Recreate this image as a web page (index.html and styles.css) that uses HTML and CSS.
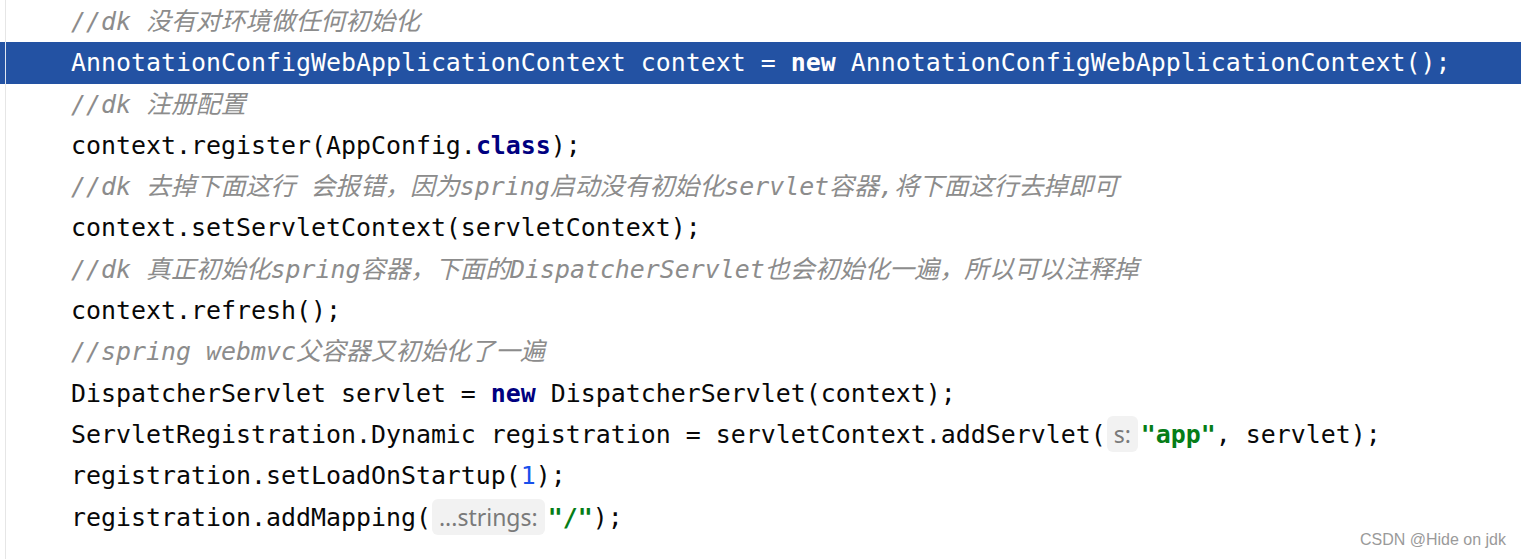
FILE: index.html
```html
<!DOCTYPE html>
<html>
<head>
<meta charset="utf-8">
<link rel="stylesheet" href="styles.css">
</head>
<body>
<div class="editor">
  <div class="line"><span class="cm">//dk 没有对环境做任何初始化</span></div>
  <div class="line selected">AnnotationConfigWebApplicationContext context = <span class="kw">new</span> AnnotationConfigWebApplicationContext();</div>
  <div class="line"><span class="cm">//dk 注册配置</span></div>
  <div class="line">context.register(AppConfig.<span class="kw">class</span>);</div>
  <div class="line"><span class="cm">//dk 去掉下面这行 会报错，因为spring启动没有初始化servlet容器,将下面这行去掉即可</span></div>
  <div class="line">context.setServletContext(servletContext);</div>
  <div class="line"><span class="cm">//dk 真正初始化spring容器，下面的DispatcherServlet也会初始化一遍，所以可以注释掉</span></div>
  <div class="line">context.refresh();</div>
  <div class="line"><span class="cm">//spring webmvc父容器又初始化了一遍</span></div>
  <div class="line">DispatcherServlet servlet = <span class="kw">new</span> DispatcherServlet(context);</div>
  <div class="line">ServletRegistration.Dynamic registration = servletContext.addServlet(<span class="hint">s:</span><span class="str">"app"</span>, servlet);</div>
  <div class="line">registration.setLoadOnStartup(<span class="num">1</span>);</div>
  <div class="line">registration.addMapping(<span class="hint">...strings:</span><span class="str">"/"</span>);</div>
  <div class="watermark">CSDN @Hide on jdk</div>
</div>
</body>
</html>
```

FILE: styles.css
```css
html, body {
  margin: 0;
  padding: 0;
  background: #ffffff;
}

.editor {
  position: relative;
  width: 1521px;
  height: 559px;
  overflow: hidden;
  padding-top: 1px;
  box-sizing: border-box;
  background: linear-gradient(to right, #ffffff 5px, #e6e6e6 5px, #e6e6e6 6px, #ffffff 6px);
}

.line {
  height: 41.3px;
  line-height: 41.3px;
  padding-left: 71px;
  white-space: pre;
  font-family: "DejaVu Sans Mono", "Noto Sans CJK SC", monospace;
  font-size: 24.92px;
  color: #080808;
}

.selected {
  background: linear-gradient(to right, #2352a3 5px, #dfe6f2 5px, #dfe6f2 6px, #2352a3 6px);
  color: #ffffff;
}

.selected .kw {
  color: #ffffff;
}

.cm {
  font-style: italic;
  color: #8c8c8c;
}

.kw {
  font-weight: bold;
  color: #000080;
}

.str {
  font-weight: bold;
  color: #067d17;
}

.num {
  color: #1750eb;
}

.hint {
  display: inline-block;
  height: 36px;
  line-height: 36px;
  padding: 0 7px;
  margin: 0 3px 0 1px;
  border-radius: 6px;
  background: #f2f2f2;
  color: #7a7a7a;
  font-family: "Noto Sans", "Open Sans", sans-serif;
  font-size: 23px;
  font-style: normal;
  vertical-align: middle;
  position: relative;
  top: -2px;
}

.watermark {
  position: absolute;
  right: 15px;
  bottom: 10px;
  font-family: "Liberation Sans", Arial, sans-serif;
  font-size: 16px;
  color: #9a9a9a;
}
```
